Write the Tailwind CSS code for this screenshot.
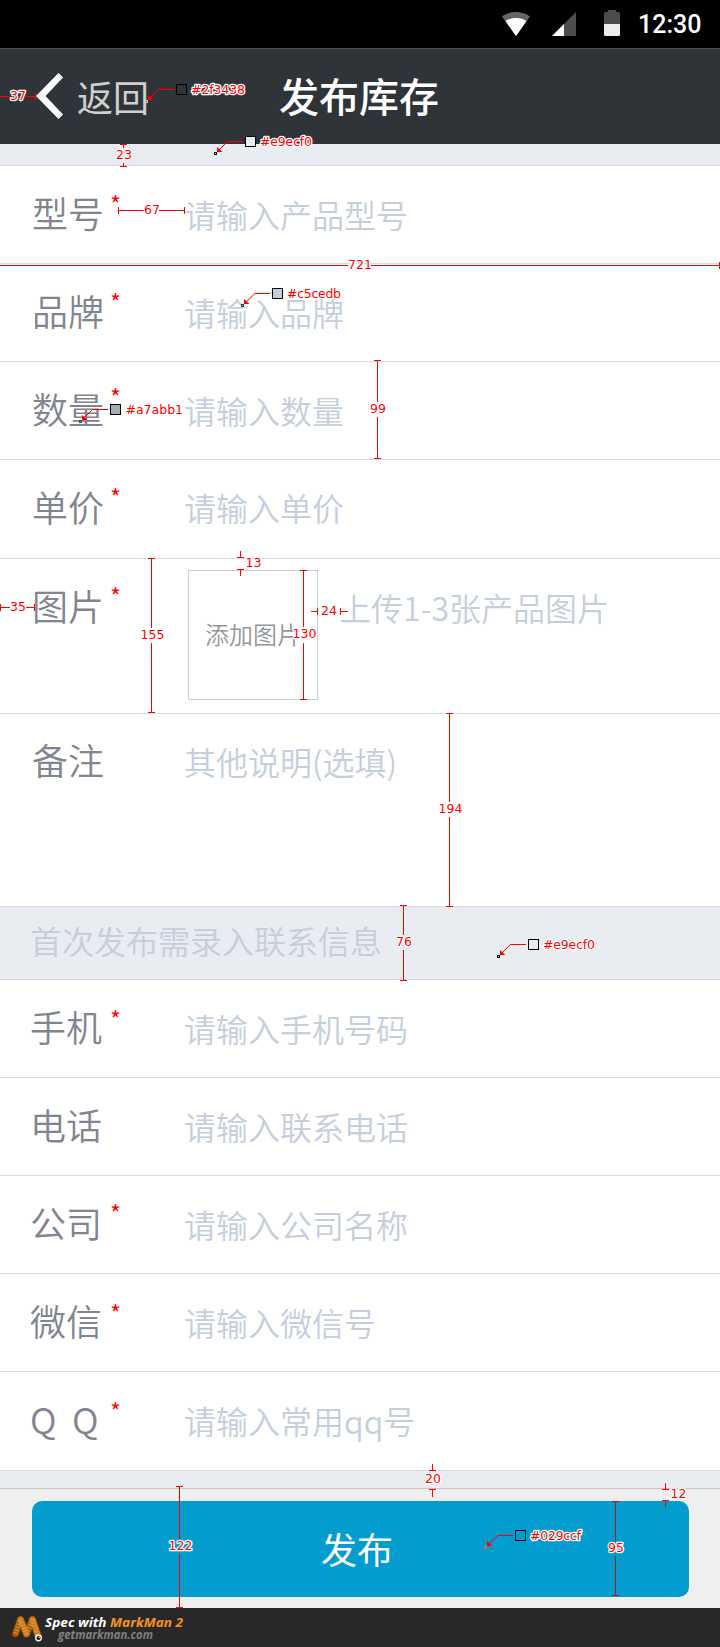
<!DOCTYPE html>
<html lang="zh-CN">
<head>
<meta charset="utf-8">
<title>发布库存</title>
<script src="https://cdn.jsdelivr.net/npm/@tailwindcss/browser@4"></script>
</head>
<body class="bg-white">
<div class="relative w-[720px] h-[1647px] overflow-hidden flex flex-col font-['Noto_Sans_CJK_SC',sans-serif] font-[350] text-[#81858f] text-[36px] leading-[52px]">

  <!-- status bar -->
  <div class="h-12 shrink-0 bg-black flex items-start">
    <svg class="ml-[502px] mt-3 shrink-0" width="28" height="24" viewBox="0 0 28 24"><path d="M0 4.500C8-1.500 20-1.500 28 4.500L14 24Z" fill="#666"/><path d="M3.500 9C9 5 19 5 24.500 9L14 24Z" fill="#fff"/></svg>
    <svg class="ml-[21px] mt-3 shrink-0" width="25" height="24" viewBox="0 0 25 24"><path d="M25 0V24H1Z" fill="#4d4d4d"/><path d="M13 12V24H1Z" fill="#fff"/></svg>
    <svg class="ml-[28px] mt-2.5 shrink-0" width="16" height="26" viewBox="0 0 16 26"><path d="M4 0h8v2h2.500Q16 2 16 3.500V14H0V3.500Q0 2 1.500 2H4Z" fill="#4d4d4d"/><path d="M0 14H16V24.500Q16 26 14.500 26H1.500Q0 26 0 24.500Z" fill="#eee"/></svg>
    <span class="ml-[18px] mt-[9px] font-[Roboto] font-medium text-[25px] leading-8 text-white">12:30</span>
  </div>

  <!-- title bar -->
  <header class="h-24 shrink-0 bg-[#2f3438] border-t border-[#484c50] flex items-center">
    <svg class="ml-9 mb-px shrink-0" width="28" height="46" viewBox="0 0 28 46"><path d="M0 23L22.500 0L27 4.500L9.500 23L27 41.500L22.500 46Z" fill="#fff"/></svg>
    <span class="ml-[13px] w-[202px] font-normal text-[#d0d0d0] pb-[2px]">返回</span>
    <h1 class="font-medium text-[40px] text-white pb-1">发布库存</h1>
  </header>
  <div class="h-[22px] shrink-0 bg-[#e9ecf0] border-b border-[#d8dae5]"></div>

  <!-- product fields -->
  <div class="h-[98px] shrink-0 border-b border-[#d8dae5] flex items-start"><span class="ml-[32px] mt-[20px] w-[78px]">型号</span><span class="w-[74px] mt-[27px] text-[24px] leading-[22px] text-[#f00]">*</span><span class="mt-[24px] text-[32px] leading-[48px] text-[#c5cedb]">请输入产品型号</span></div>
  <div class="h-[98px] shrink-0 border-b border-[#d8dae5] flex items-start"><span class="ml-[32px] mt-[20px] w-[78px]">品牌</span><span class="w-[74px] mt-[27px] text-[24px] leading-[22px] text-[#f00]">*</span><span class="mt-[24px] text-[32px] leading-[48px] text-[#c5cedb]">请输入品牌</span></div>
  <div class="h-[98px] shrink-0 border-b border-[#d5dbe3] flex items-start"><span class="ml-[32px] mt-[20px] w-[78px]">数量</span><span class="w-[74px] mt-[24px] text-[24px] leading-[22px] text-[#f00]">*</span><span class="mt-[24px] text-[32px] leading-[48px] text-[#c5cedb]">请输入数量</span></div>
  <div class="h-[99px] shrink-0 border-b border-[#d5dbe3] flex items-start"><span class="ml-[32px] mt-[20px] w-[78px]">单价</span><span class="w-[74px] mt-[26px] text-[24px] leading-[22px] text-[#f00]">*</span><span class="mt-[23px] text-[32px] leading-[48px] text-[#c5cedb]">请输入单价</span></div>
  <div class="h-[155px] shrink-0 border-b border-[#d8dae5] flex items-start"><span class="ml-[32px] mt-[20px] w-[78px]">图片</span><span class="w-[78px] mt-[26px] text-[24px] leading-[22px] text-[#f00]">*</span>
    <div class="mt-[11px] size-[130px] border border-[#c5cedb] flex items-center pl-4 pb-[2px] text-[24px] text-[#94969c] shrink-0 whitespace-nowrap">添加图片</div>
    <span class="ml-[21px] mt-[24px] text-[32px] leading-[48px] text-[#c5cedb]">上传1-3张产品图片</span></div>
  <div class="h-[193px] shrink-0 border-b border-[#d8dae5] flex items-start"><span class="ml-[32px] mt-[19px] w-[152px]">备注</span><span class="mt-[23px] text-[32px] leading-[48px] text-[#c5cedb]">其他说明(选填)</span></div>

  <div class="h-[73px] shrink-0 border-b border-[#d8dae5] bg-[#e9ecf0] flex items-start"><span class="ml-[30px] mt-[9px] text-[32px] leading-[48px] text-[#c5cedb]">首次发布需录入联系信息</span></div>

  <!-- contact fields -->
  <div class="h-[98px] shrink-0 border-b border-[#d8dae5] flex items-start"><span class="ml-[30px] mt-[20px] w-[80px]">手机</span><span class="w-[74px] mt-[28px] text-[24px] leading-[22px] text-[#f00]">*</span><span class="mt-[24px] text-[32px] leading-[48px] text-[#c5cedb]">请输入手机号码</span></div>
  <div class="h-[98px] shrink-0 border-b border-[#d8dae5] flex items-start"><span class="ml-[30px] mt-[20px] w-[154px]">电话</span><span class="mt-[24px] text-[32px] leading-[48px] text-[#c5cedb]">请输入联系电话</span></div>
  <div class="h-[98px] shrink-0 border-b border-[#d8dae5] flex items-start"><span class="ml-[30px] mt-[20px] w-[80px]">公司</span><span class="w-[74px] mt-[26px] text-[24px] leading-[22px] text-[#f00]">*</span><span class="mt-[24px] text-[32px] leading-[48px] text-[#c5cedb]">请输入公司名称</span></div>
  <div class="h-[98px] shrink-0 border-b border-[#d8dae5] flex items-start"><span class="ml-[30px] mt-[20px] w-[80px]">微信</span><span class="w-[74px] mt-[28px] text-[24px] leading-[22px] text-[#f00]">*</span><span class="mt-[24px] text-[32px] leading-[48px] text-[#c5cedb]">请输入微信号</span></div>
  <div class="h-[99px] shrink-0 border-b border-[#d5dbe3] flex items-start"><span class="ml-[30px] mt-[20px] w-[80px] whitespace-pre [word-spacing:7.5px]">Q Q</span><span class="w-[74px] mt-[28px] text-[24px] leading-[22px] text-[#f00]">*</span><span class="mt-[24px] text-[32px] leading-[48px] text-[#c5cedb]">请输入常用qq号</span></div>
  <div class="h-[18px] shrink-0 bg-[#e9ecf0] border-b border-[#c4c6c9]"></div>

  <!-- submit -->
  <div class="h-[119px] shrink-0 bg-[#efefef] pt-3 pl-8">
    <button class="block w-[657px] h-24 rounded-[10px] bg-[#029ccf] text-white text-[36px] leading-[52px] font-normal pr-[7px] pb-[3px]">发布</button>
  </div>

  <footer class="h-[39px] shrink-0 bg-[#282828]">
    <svg width="240" height="39" viewBox="0 0 240 39">
      <g stroke-linecap="round" fill="none">
        <path d="M15.500 26L20.500 11.500L26.500 26L32.500 11.500L38.500 29" stroke="#6b3505" stroke-width="7.500" stroke-linejoin="round"/>
        <path d="M15.500 25.500L20.500 11.500" stroke="#a85f10" stroke-width="6"/>
        <path d="M26.500 26L32.500 11.500" stroke="#a85f10" stroke-width="6"/>
        <path d="M20.500 11.500L26.500 26" stroke="#c87a1e" stroke-width="6"/>
        <path d="M32.500 11.500L38.500 29" stroke="#c87a1e" stroke-width="6"/>
        <path d="M15.500 25.500L20.500 11.500M20.500 11.500L26.500 26M26.500 26L32.500 11.500M32.500 11.500L38.500 29" stroke="#f3b55c" stroke-width="4.500" stroke-linecap="butt" stroke-dasharray="1 2" opacity=".6"/>
      </g>
      <circle cx="38.500" cy="30" r="3.400" fill="#fff"/><circle cx="38.500" cy="30" r="2.100" fill="#111"/><circle cx="39.200" cy="29.300" r=".7" fill="#fff"/>
      <text x="45" y="18.500" textLength="138" font-family="Open Sans" font-weight="700" font-style="italic" font-size="13" lengthAdjust="spacingAndGlyphs" fill="#fff">Spec with <tspan fill="#f7941d">MarkMan 2</tspan></text>
      <text x="58" y="30.500" textLength="95" font-family="Open Sans" font-weight="700" font-style="italic" font-size="11.500" lengthAdjust="spacingAndGlyphs" fill="#808080">getmarkman.com</text>
    </svg>
  </footer>

  <!-- measurement overlay -->
  <svg class="absolute inset-0" width="720" height="1647" viewBox="0 0 720 1647">
    <g stroke="#f00" fill="none" shape-rendering="crispEdges">
      <path d="M0 96.500H10M26 96.500H35M35.500 93V100"/>
      <path d="M120 144.500H127M123.500 145V148M123.500 163V166M120 166.500H127"/>
      <path d="M118.500 207V214M118 210.500H144M159 210.500H184M184.500 207V214"/>
      <path d="M0 265.500H348M371 265.500H720M719.500 262V269"/>
      <path d="M374 360.500H381M377.500 361V402M377.500 417V458M374 458.500H381"/>
      <path d="M240.500 551V557M237 557.500H244M237 569.500H244M240.500 570V576"/>
      <path d="M148 558.500H155M151.500 559V628M151.500 643V712M148 712.500H155"/>
      <path d="M300 570.500H307M303.500 571V627M303.500 643V699M300 699.500H307"/>
      <path d="M311 611.500H317M317.500 608V615M340.500 608V615M341 611.500H348"/>
      <path d="M0.500 604V611M0 607.500H10M26 607.500H34M34.500 604V611"/>
      <path d="M446 713.500H453M449.500 714V802M449.500 817V906M446 906.500H453"/>
      <path d="M400 905.500H407M403.500 906V935M403.500 950V980M400 980.500H407"/>
      <path d="M432.500 1464V1470M429 1470.500H436M429 1489.500H436M432.500 1490V1497"/>
      <path d="M665.500 1483V1489M662 1489.500H669M662 1500.500H669M665.500 1501V1507"/>
      <path d="M176 1486.500H183M179.500 1487V1539M179.500 1554V1607M176 1607.500H183"/>
      <path d="M612 1501.500H619M615.500 1502V1541M615.500 1556V1595M612 1595.500H619" stroke="#c8101a"/>
    </g>
    <g stroke="#f00" fill="none">
      <path d="M149 99L158.500 89.500H174"/><path d="M218 151L227.500 141.500H243"/><path d="M245 303L255 293.500H270"/><path d="M83 419L92.500 409.500H108"/><path d="M501 954L510.500 944.500H526"/><path d="M488 1545L498 1535.500H513"/>
    </g>
    <g fill="#f00">
      <path d="M148 100V95L153.500 100Z"/><path d="M217 152V147L222.500 152Z"/><path d="M244 304V299L249.500 304Z"/><path d="M82 420V415L87.500 420Z"/><path d="M500 955V950L505.500 955Z"/><path d="M487 1546V1541L492.500 1546Z"/>
    </g>
    <g fill="none" stroke="#000" shape-rendering="crispEdges">
      <path d="M176.500 84.500h10v10h-10z" fill="#2f3438"/><path d="M245.500 136.500h10v10h-10z" fill="#e9ecf0"/><path d="M272.500 288.500h10v10h-10z" fill="#c5cedb"/><path d="M110.500 404.500h10v10h-10z" fill="#a7abb1"/><path d="M528.500 939.500h10v10h-10z" fill="#e9ecf0"/><path d="M515.500 1530.500h10v10h-10z" fill="#029ccf"/>
      <path d="M145.500 100.500h2v2h-2z" stroke="#ccc"/><path d="M214.500 152.500h2v2h-2z"/><path d="M241.500 304.500h2v2h-2z" stroke="#333"/><path d="M79.500 420.500h2v2h-2z" stroke="#444"/><path d="M497.500 955.500h2v2h-2z"/><path d="M484.500 1546.500h2v2h-2z" stroke="#f46030"/>
    </g>
    <g font-family="DejaVu Sans" font-size="12.500" font-weight="400" fill="#f00" stroke="#fff" stroke-width="2.500" stroke-linejoin="round" paint-order="stroke">
      <text x="10" y="100">37</text><text x="191" y="94" textLength="54">#2f3438</text><text x="260" y="146" textLength="52">#e9ecf0</text><text x="116" y="159">23</text>
      <text x="144" y="214">67</text><text x="348" y="269">721</text><text x="287" y="298" textLength="54">#c5cedb</text><text x="370" y="413">99</text><text x="125.500" y="414" textLength="57.500">#a7abb1</text>
      <text x="245.500" y="567">13</text><text x="140.500" y="639">155</text><text x="292.500" y="638">130</text><text x="321" y="615">24</text><text x="10" y="611">35</text>
      <text x="438.500" y="813">194</text><text x="396" y="946">76</text><text x="543" y="949" textLength="52">#e9ecf0</text>
      <text x="425" y="1483">20</text><text x="670.500" y="1498">12</text><text x="168.500" y="1550">122</text><text x="608" y="1552">95</text><text x="530" y="1540" textLength="51">#029ccf</text>
    </g>
  </svg>
</div>
</body>
</html>
